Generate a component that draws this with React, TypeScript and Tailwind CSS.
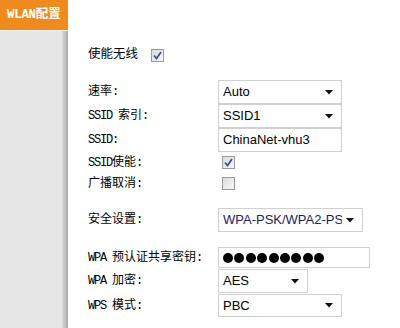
import React from 'react';

const labelFont = { fontFamily: '"Liberation Mono", "Noto Sans CJK SC", monospace' };
const arial = { fontFamily: '"Liberation Sans", Arial, sans-serif' };

// latin bits in labels are narrow (SimSun-ish), squeeze them
const L = ({ children }: { children: React.ReactNode }) => (
  <span className="tracking-[-1.2px]">{children}</span>
);

const Check = ({ checked }: { checked?: boolean }) => (
  <span className="inline-flex w-[13px] h-[13px] border border-[#9a9a9a] bg-gradient-to-br from-[#dcdcdc] to-[#f7f7f7] items-center justify-center">
    {checked && (
      <svg width="9" height="9" viewBox="0 0 9 9">
        <path d="M1 4.5 L3.5 7.5 L8 1" fill="none" stroke="#3b4f9e" strokeWidth="1.8" />
      </svg>
    )}
  </span>
);

const Select = ({ value, w, h, text = 'text-[13px] text-black' }: { value: string; w: string; h: string; text?: string }) => (
  <div className={`${w} ${h} border border-[#d0d0d0] bg-white flex items-center pl-[4px] pr-[8px] overflow-hidden`}>
    <span className={`flex-1 min-w-0 ${text} whitespace-nowrap overflow-hidden`} style={arial}>
      {value}
    </span>
    <svg width="8" height="5" viewBox="0 0 8 5" className="ml-[4px] shrink-0">
      <path d="M0 0 H8 L4 4.5 Z" fill="#111" />
    </svg>
  </div>
);

const Label = ({ h, className = '', children }: { h: string; className?: string; children: React.ReactNode }) => (
  <div className={`${h} flex items-center ${className}`}>
    <span className="whitespace-pre">{children}</span>
  </div>
);

export default function App() {
  return (
    <div className="w-[400px] h-[328px] flex bg-white overflow-hidden">
      {/* sidebar */}
      <div className="w-[68px] flex flex-col shrink-0">
        <div className="h-[30px] bg-[#ef8a1e] flex items-center pl-[7px]">
          <span className="text-white text-[12.5px] font-bold" style={labelFont}>
            <span className="tracking-[-0.3px]">WLAN</span>配置
          </span>
        </div>
        <div className="flex-1 flex border-t border-[#f3f3f3]">
          <div className="flex-1 bg-[#e6e6e6]" />
          <div className="w-[6px] bg-gradient-to-r from-[#dadada] via-[#c4c4c4] to-[#a9a9a9]" />
        </div>
      </div>

      {/* content */}
      <div className="flex-1 pl-[20px] pt-[45px] text-[12px] text-black" style={labelFont}>
        <div className="h-[20px] flex items-center">
          <span className="text-[12.5px]">使能无线</span>
          <span className="ml-[13px] flex"><Check checked /></span>
        </div>

        <div className="grid grid-cols-[130px_1fr] mt-[15px]">
          <Label h="h-[24px]">速率:</Label>
          <Select value="Auto" w="w-[124px]" h="h-[24px]" />

          <Label h="h-[24px]"><L>SSID </L>索引:</Label>
          <Select value="SSID1" w="w-[124px]" h="h-[24px]" />

          <Label h="h-[24px]"><L>SSID:</L></Label>
          <div className="w-[124px] h-[24px] border border-[#d0d0d0] flex items-center pl-[4px] text-[13px]" style={arial}>
            ChinaNet-vhu3
          </div>

          <Label h="h-[21px]"><L>SSID</L>使能:</Label>
          <div className="h-[21px] flex items-center pl-[4px]"><Check checked /></div>

          <Label h="h-[21px]">广播取消:</Label>
          <div className="h-[21px] flex items-center pl-[4px]"><Check /></div>

          <Label h="h-[24px]" className="mt-[14px]">安全设置:</Label>
          <div className="mt-[14px]">
            <Select value="WPA-PSK/WPA2-PSK" w="w-[145px]" h="h-[24px]" text="text-[13px] text-[#1c2360]" />
          </div>

          <Label h="h-[21px]" className="mt-[15px]"><L>WPA </L>预认证共享密钥:</Label>
          <div className="mt-[15px] w-[152px] h-[21px] border border-[#d0d0d0] flex items-center pl-[4px] gap-[1.4px]">
            {Array.from({ length: 9 }).map((_, i) => (
              <span key={i} className="w-[10px] h-[10px] rounded-full bg-black" />
            ))}
          </div>

          <Label h="h-[24px]" className="mt-[1px]"><L>WPA </L>加密:</Label>
          <div className="mt-[1px]">
            <Select value="AES" w="w-[90px]" h="h-[24px]" />
          </div>

          <Label h="h-[23px]" className="mt-[1px]"><L>WPS </L>模式:</Label>
          <div className="mt-[1px]">
            <Select value="PBC" w="w-[124px]" h="h-[23px]" />
          </div>
        </div>
      </div>
    </div>
  );
}
